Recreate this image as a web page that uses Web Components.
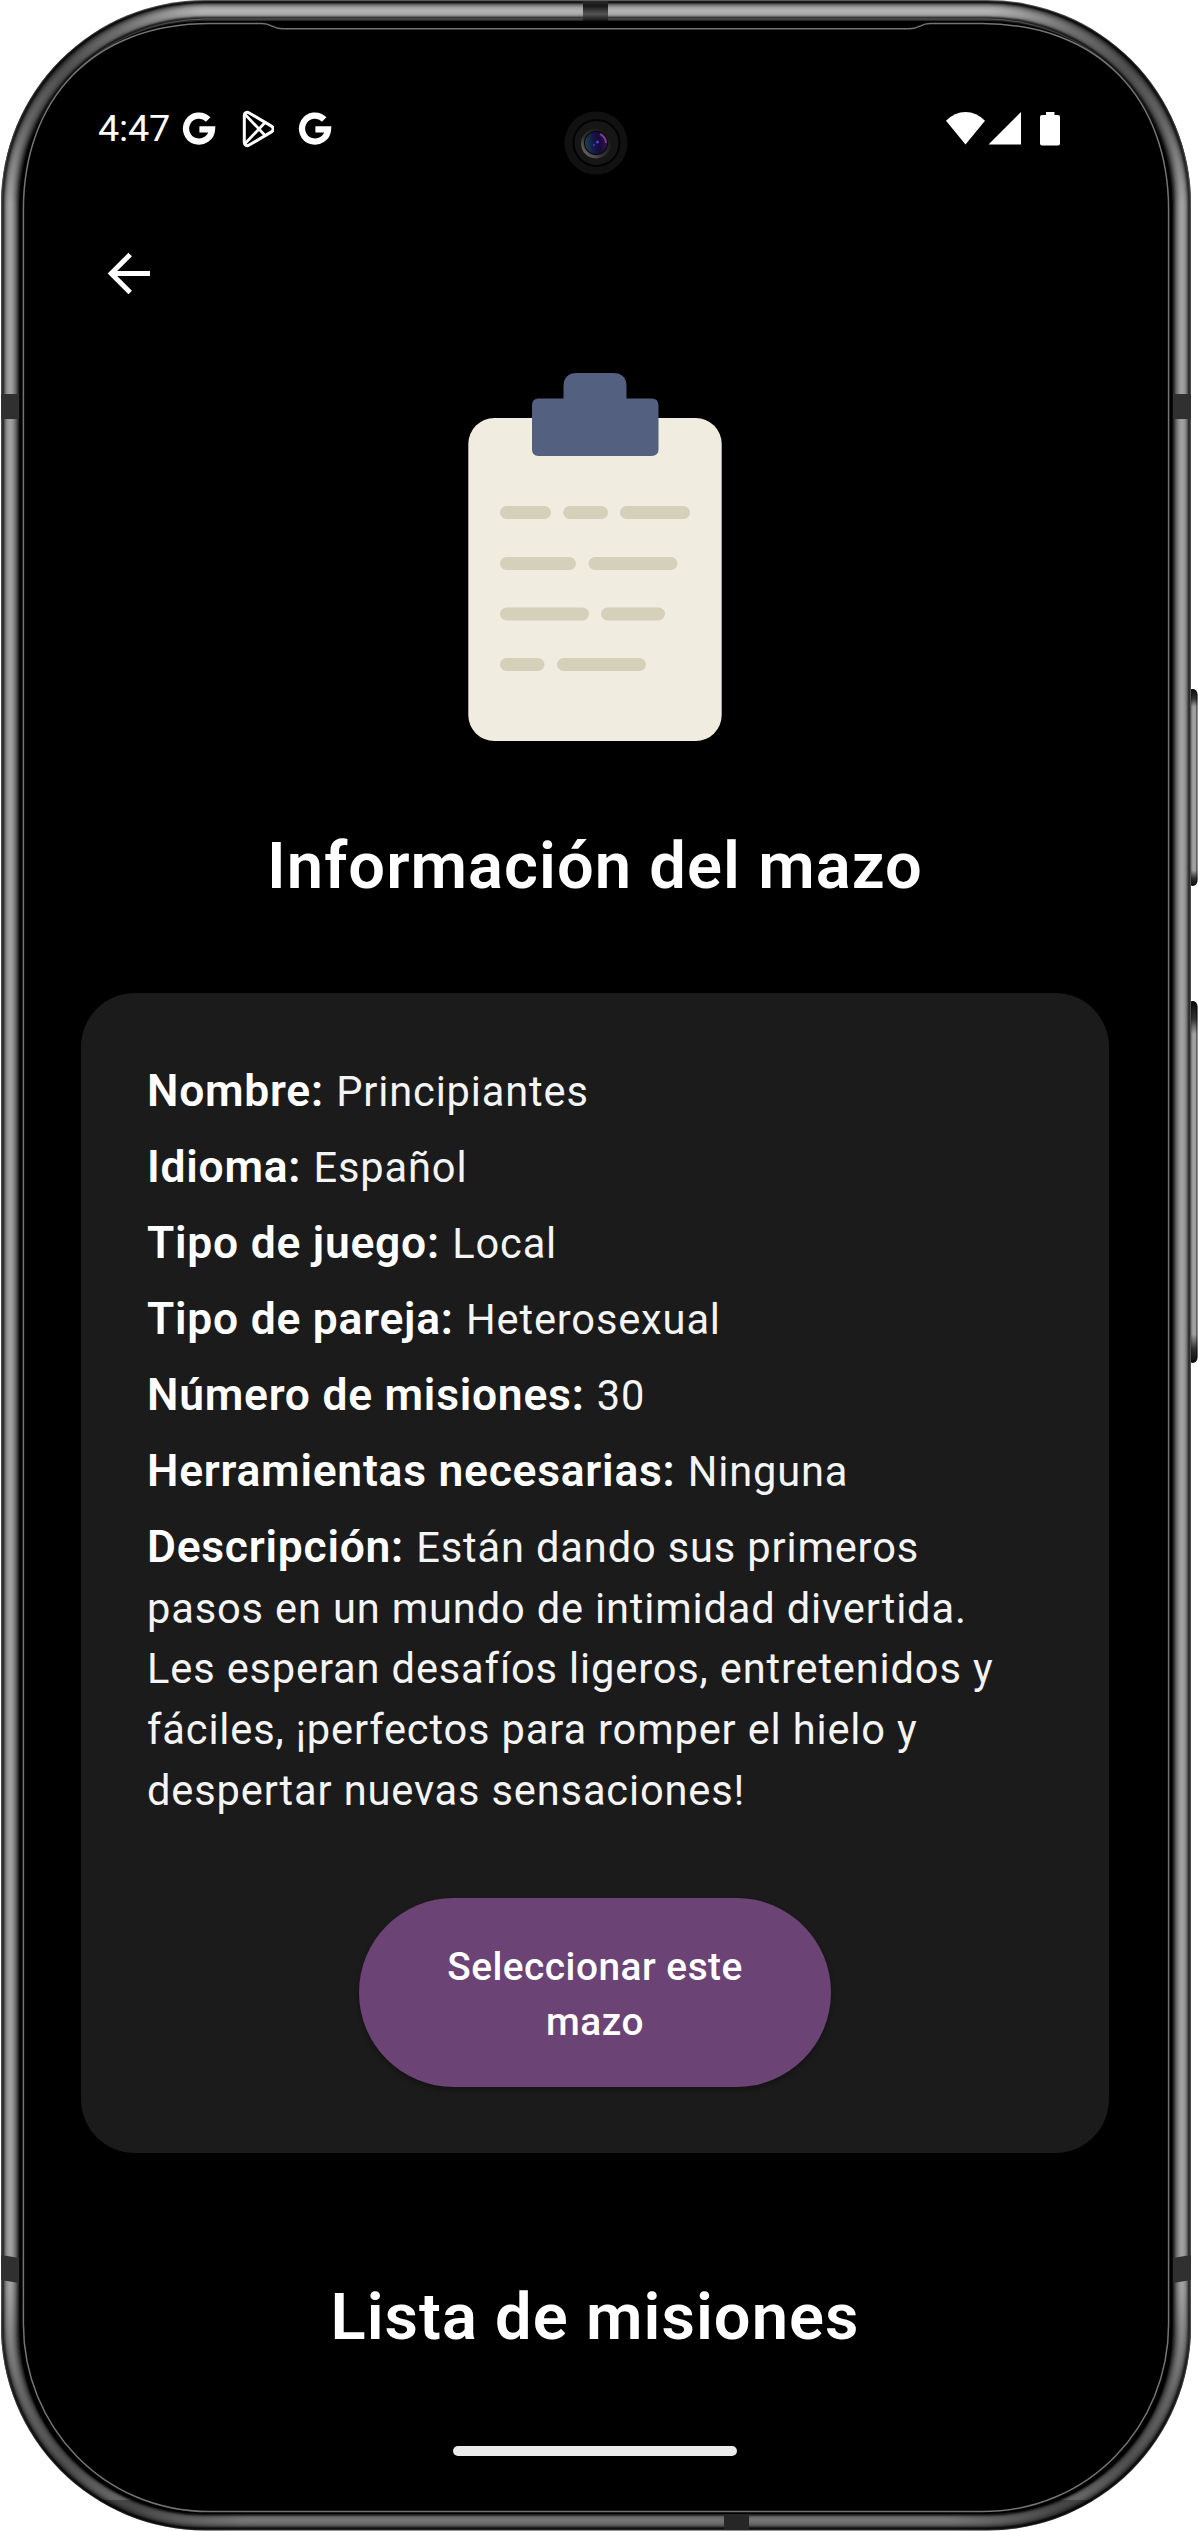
<!DOCTYPE html>
<html lang="es">
<head>
<meta charset="utf-8">
<title>Información del mazo</title>
<style>
  html, body { margin: 0; background: #fff; }
  body { font-family: Roboto, "Noto Sans", sans-serif; color: #fff; }
</style>
</head>
<body>
<phone-shell>
  <status-bar time="4:47"></status-bar>
  <back-bar></back-bar>
  <clipboard-art></clipboard-art>
  <section-title class="first">Información del mazo</section-title>
  <info-card>
    <info-row label="Nombre:">Principiantes</info-row>
    <info-row label="Idioma:">Español</info-row>
    <info-row label="Tipo de juego:">Local</info-row>
    <info-row label="Tipo de pareja:">Heterosexual</info-row>
    <info-row label="Número de misiones:">30</info-row>
    <info-row label="Herramientas necesarias:">Ninguna</info-row>
    <info-row label="Descripción:">Están dando sus primeros pasos en un mundo de intimidad divertida. Les esperan desafíos ligeros, entretenidos y fáciles, ¡perfectos para romper el hielo y despertar nuevas sensaciones!</info-row>
    <pill-button slot="action">Seleccionar este mazo</pill-button>
  </info-card>
  <section-title class="second">Lista de misiones</section-title>
  <home-indicator slot="bottom"></home-indicator>
</phone-shell>

<script>
const define = (name, html, setup) => customElements.define(name, class extends HTMLElement {
  constructor() {
    super();
    this.attachShadow({ mode: 'open' }).innerHTML = html;
  }
  connectedCallback() { if (setup) setup(this, this.shadowRoot); }
});

/* Metal frame: concentric rounded rects, one per pixel of depth. */
function frameSvg() {
  const top = [90, 28, 20, 60, 95, 122, 140, 155, 165, 172, 176, 178, 176, 172, 165, 150, 115, 60, 40, 95, 40];
  const side = [80, 44, 50, 85, 115, 135, 148, 156, 160, 160, 156, 148, 136, 122, 106, 86, 60, 40, 22, 8, 0];
  let rings = '', sides = '';
  top.forEach((v, d) => {
    const r = 204 - d * 1.02;
    const rect = c => `<rect x="${1 + d}" y="${d * 0.98}" width="${1190 - 2 * d}" height="${2530.5 - d * 1.86}" rx="${r}" fill="rgb(${c},${c},${c})"/>`;
    rings += rect(v);
    sides += rect(side[d]);
  });
  return `
  <svg width="1198" height="2531" viewBox="0 0 1198 2531">
    <defs>
      <linearGradient id="b" x1="0" x2="0" y1="0" y2="1">
        <stop offset="0" stop-color="#0a0a0a"/><stop offset=".05" stop-color="#333"/><stop offset=".09" stop-color="#a0a0a0"/>
        <stop offset=".92" stop-color="#a0a0a0"/><stop offset=".96" stop-color="#333"/><stop offset="1" stop-color="#0a0a0a"/>
      </linearGradient>
      <linearGradient id="bx"><stop offset="0" stop-color="#000" stop-opacity=".3"/><stop offset=".3" stop-color="#000" stop-opacity="0"/><stop offset=".7" stop-color="#000" stop-opacity="0"/><stop offset="1" stop-color="#000" stop-opacity=".8"/></linearGradient>
      <radialGradient id="k"><stop offset="0" stop-color="#000" stop-opacity=".55"/><stop offset=".45" stop-color="#000" stop-opacity=".38"/><stop offset="1" stop-color="#000" stop-opacity="0"/></radialGradient>
      <linearGradient id="mid" gradientUnits="userSpaceOnUse" x1="0" x2="0" y1="0" y2="2531">
        <stop offset=".02" stop-color="#fff" stop-opacity="0"/><stop offset=".06" stop-color="#fff"/>
        <stop offset=".93" stop-color="#fff"/><stop offset=".985" stop-color="#fff" stop-opacity="0"/>
      </linearGradient>
      <mask id="m"><rect width="1198" height="2531" fill="url(#mid)"/></mask>
      <clipPath id="c"><rect x="1" y="0" width="1190" height="2530.5" rx="204"/></clipPath>
      <linearGradient id="tb" x1="0" x2="0" y1="0" y2="1"><stop offset="0" stop-color="#2a2a2a"/><stop offset=".25" stop-color="#181818"/><stop offset=".65" stop-color="#555"/><stop offset="1" stop-color="#111"/></linearGradient>
    </defs>
    <g><rect x="1188" y="689" width="9.4" height="197" rx="5" fill="url(#b)"/><rect x="1191" y="692" width="6.4" height="191" rx="3" fill="url(#bx)"/></g>
    <g><rect x="1188" y="1001" width="9.4" height="362" rx="5" fill="url(#b)"/><rect x="1191" y="1004" width="6.4" height="356" rx="3" fill="url(#bx)"/></g>
    ${rings}
    <g mask="url(#m)">${sides}</g>
    <g clip-path="url(#c)">
      <circle cx="60" cy="62" r="150" fill="url(#k)"/><circle cx="1132" cy="62" r="150" fill="url(#k)"/>
      <circle cx="60" cy="2470" r="190" fill="url(#k)"/><circle cx="1132" cy="2470" r="190" fill="url(#k)"/>
      <rect x="0" y="2500" width="1198" height="31" fill="#000" opacity=".34"/>
      <rect x="583" y="1" width="25" height="20" fill="url(#tb)"/>
      <rect x="724" y="2514" width="25" height="16" fill="#262626"/>
      <path d="M1 394H19V419H1z" fill="#303030"/><path d="M1173 394H1191V419H1173z" fill="#303030"/>
      <path d="M1 2255L19 2258V2283L1 2280z" fill="#303030"/><path d="M1191 2255L1173 2258V2283L1191 2280z" fill="#303030"/>
    </g>
    <rect x="19.5" y="21" width="1153" height="2493" rx="184" fill="#000"/>
    <path fill="none" stroke="#747474" stroke-width="1.5"
      d="M23.4 210C23.4 100 92 23.6 210 23.6H262C272 23.6 272 28.8 283 28.8H909C920 28.8 920 23.6 930 23.6H982C1100 23.6 1168.6 100 1168.6 210V2324C1168.6 2425 1090 2511.6 982 2511.6H210C102 2511.6 23.4 2425 23.4 2324Z"/>
  </svg>`;
}

define('phone-shell', `
<style>
  :host { display: block; position: relative; width: 1198px; height: 2531px; overflow: hidden; }
  .frame { position: absolute; inset: 0; }
  .frame svg { display: block; }
  .screen { position: relative; box-sizing: border-box; width: 1192px; height: 2531px; padding: 100px 83px 75px 81px;
            display: flex; flex-direction: column; }
  .bottom { margin-top: auto; display: flex; justify-content: center; }
</style>
<div class="frame"></div>
<div class="screen"><slot></slot><div class="bottom"><slot name="bottom"></slot></div></div>`,
(el, root) => { root.querySelector('.frame').innerHTML = frameSvg(); });

const G = `<svg width="34" height="34" viewBox="0 0 34 34"><path d="M26.2 7.4A13 13 0 1 0 30 17.3H17.4" fill="none" stroke="#fff" stroke-width="6.3" /></svg>`;
define('status-bar', `
<style>
  :host { display: flex; align-items: center; height: 58px; padding: 0 49px 0 17px; font-size: 37.8px; line-height: 56px; position: relative; }
  .time { width: 84px; height: 58px; letter-spacing: -.2px; }
  svg { display: block; flex: none; }
  .icons { display: flex; align-items: center; gap: 24px; }
  .right { margin-left: auto; display: flex; align-items: center; }
  .camera { position: absolute; left: 482.5px; top: 10.5px; }
</style>
<span class="time"></span>
<div class="icons">${G}
  <svg width="34" height="38" viewBox="0 0 34 38" fill="none" stroke="#fff" stroke-width="3" stroke-linejoin="round" stroke-linecap="round"><g transform="translate(1.600 0)"><path d="M2.700 5.400C2.700 2.400 5.200 1.600 7.600 3L29 15.600C32.500 17.400 32.500 20.600 29 22.400L7.600 35C5.200 36.400 2.700 35.600 2.700 32.600Z"/><path d="M4 5L23.500 25.500M4 33L23.500 12.500" stroke-width="2.700"/></g></svg>
${G}</div>
<div class="right">
  <svg width="114" height="36" viewBox="0 0 114 36" fill="#fff"><path d="M0 9.800Q8.500 1 19.500 1T39 9.800L19.500 33.500Z"/><path d="M42.500 33.500L75 1V33.500Z"/><path d="M100 1H108.500V4H112Q114 4 114 6V32.500Q114 34.500 112 34.500H96Q94 34.500 94 32.500V6Q94 4 96 4H100Z"/></svg>
</div>
<svg class="camera" width="64" height="64" viewBox="0 0 64 64">
  <defs>
    <linearGradient id="r" x1="0" y1="1" x2="1" y2="0"><stop offset="0" stop-color="#8a8a8a"/><stop offset=".4" stop-color="#333"/><stop offset="1" stop-color="#0c0c0c"/></linearGradient>
    <linearGradient id="l" x1="0" y1=".5" x2="1" y2=".4"><stop offset="0" stop-color="#1b4347"/><stop offset=".4" stop-color="#15154c"/><stop offset=".65" stop-color="#170b38"/><stop offset="1" stop-color="#3a1350"/></linearGradient>
  </defs>
  <circle cx="32" cy="32" r="31.600" fill="#111"/><circle cx="32.500" cy="32" r="23" fill="#161616" stroke="#030303" stroke-width="2"/>
  <circle cx="32" cy="32.500" r="15" fill="url(#r)" opacity=".9"/><circle cx="32" cy="32" r="12" fill="#050505"/>
  <circle cx="32" cy="32" r="11" fill="url(#l)"/><path d="M36 23Q42 26 42 32" stroke="#a45cc0" stroke-width="2" fill="none" opacity=".6"/>
  <circle cx="33.500" cy="31" r="1.500" fill="#5040e8"/><circle cx="30" cy="34" r="1.200" fill="#3430b8"/>
</svg>`,
(el, root) => { root.querySelector('.time').textContent = el.getAttribute('time'); });

define('back-bar', `
<style>:host { display: flex; height: 68px; padding: 85px 0 0 17px; } svg { display: block; }</style>
<svg width="64" height="64" viewBox="0 0 64 64"><path d="M52 30.500H15M32.200 11.500L13.200 30.500L32.200 49.500" fill="none" stroke="#fff" stroke-width="5"/></svg>`);

define('clipboard-art', `
<style>:host { display: flex; justify-content: center; margin-top: 62px; } svg { display: block; }</style>
<svg width="256" height="370" viewBox="0 0 256 370">
  <rect x="1.300" y="45" width="253.400" height="323" rx="26" fill="#f0ecdf"/>
  <path d="M96.500 25.500V13.500Q96.500 0 110 0H146Q159.500 0 159.500 13.500V25.500H184.500Q191.500 25.500 191.500 32V76.500Q191.500 83 184.500 83H71.500Q65 83 65 76.500V32Q65 25.500 71.500 25.500Z" fill="#546080"/>
  <g fill="#d5d0ba">
    <rect x="33" y="133" width="51" height="13" rx="6.500"/><rect x="96.300" y="133" width="44.700" height="13" rx="6.500"/><rect x="153" y="133" width="70" height="13" rx="6.500"/>
    <rect x="33" y="184" width="76" height="13" rx="6.500"/><rect x="121.500" y="184" width="89" height="13" rx="6.500"/>
    <rect x="33" y="234.500" width="89" height="13" rx="6.500"/><rect x="134" y="234.500" width="64" height="13" rx="6.500"/>
    <rect x="33" y="285" width="44.500" height="13" rx="6.500"/><rect x="90" y="285" width="89" height="13" rx="6.500"/>
  </g>
</svg>`);

define('section-title', `
<style>
  :host { display: block; text-align: center; font-size: 65px; font-weight: 600; line-height: 80px; letter-spacing: 1.050px; white-space: nowrap; }
  :host(.first) { margin-top: 83px; }
  :host(.second) { margin-top: 124px; }
</style><slot></slot>`);

define('info-card', `
<style>
  :host { display: flex; flex-direction: column; box-sizing: border-box; width: 1028px; height: 1160px; margin-top: 87px; padding: 69.300px 66px 66px; border-radius: 54px; background: #1b1b1b; }
  .rows { display: flex; flex-direction: column; gap: 15.400px; }
  .action { display: flex; justify-content: center; margin-top: auto; }
</style>
<div class="rows"><slot></slot></div><div class="action"><slot name="action"></slot></div>`);

define('info-row', `
<style>
  :host { display: block; font-size: 41.600px; line-height: 60.600px; letter-spacing: .850px; color: #f4f4f4; }
  b { font-size: 44.400px; line-height: 1; font-weight: 600; letter-spacing: .750px; color: #fff; margin-right: 1.200px; }
</style><b></b> <slot></slot>`,
(el, root) => { root.querySelector('b').textContent = el.getAttribute('label'); });

define('pill-button', `
<style>
  :host { display: block; width: 472px; }
  button { display: block; box-sizing: border-box; width: 472px; height: 189px; padding: 2px 80px 0; border: 0; border-radius: 95px;
           background: #6b4375; color: #fff; font: 500 38.800px/55px Roboto, sans-serif; letter-spacing: .500px; box-shadow: 0 3px 5px rgba(0,0,0,.3); }
</style><button><slot></slot></button>`);

define('home-indicator', `
<style>:host { display: block; width: 284px; height: 10px; border-radius: 5px; background: #ebebeb; }</style>`);
</script>
</body>
</html>
